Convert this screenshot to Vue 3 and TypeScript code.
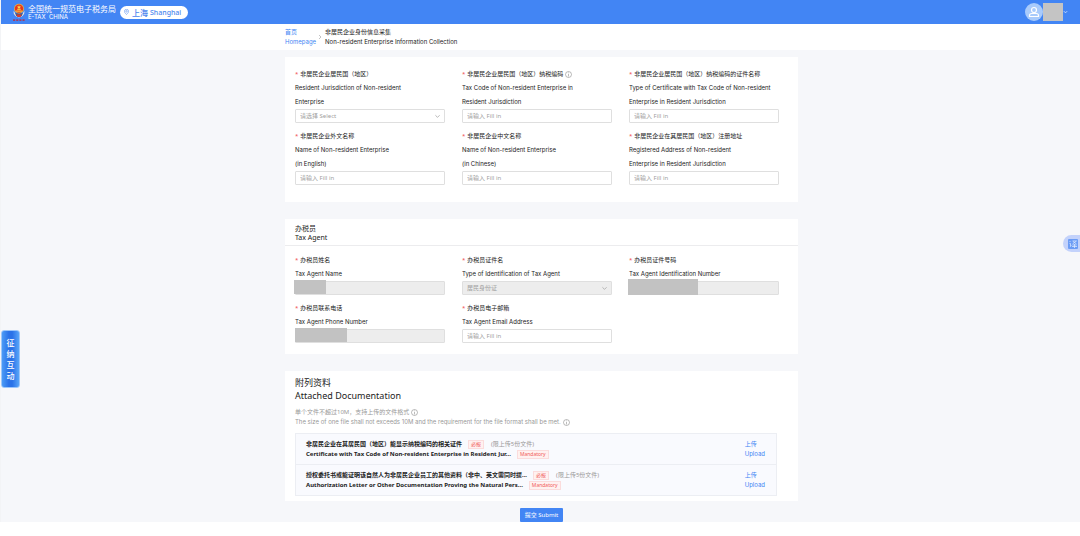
<script setup lang="ts">
import { ref } from 'vue'

interface Field {
  id: string
  zh: string
  en: string[]
  kind: 'text' | 'select'
  placeholder: string
  info?: boolean
  disabled?: boolean
  mask?: string
}

interface Attachment {
  zh: string
  en: string
}

const enterpriseFields: Field[] = [
  { id: 'jurisdiction', zh: '非居民企业居民国（地区）', en: ['Resident Jurisdiction of Non-resident', 'Enterprise'], kind: 'select', placeholder: '请选择 Select' },
  { id: 'tax-code', zh: '非居民企业居民国（地区）纳税编码', en: ['Tax Code of Non-resident Enterprise in', 'Resident Jurisdiction'], kind: 'text', placeholder: '请输入 Fill in', info: true },
  { id: 'certificate', zh: '非居民企业居民国（地区）纳税编码的证件名称', en: ['Type of Certificate with Tax Code of Non-resident', 'Enterprise in Resident Jurisdiction'], kind: 'text', placeholder: '请输入 Fill in' },
  { id: 'name-en', zh: '非居民企业外文名称', en: ['Name of Non-resident Enterprise', '(in English)'], kind: 'text', placeholder: '请输入 Fill in' },
  { id: 'name-zh', zh: '非居民企业中文名称', en: ['Name of Non-resident Enterprise', '(in Chinese)'], kind: 'text', placeholder: '请输入 Fill in' },
  { id: 'address', zh: '非居民企业在其居民国（地区）注册地址', en: ['Registered Address of Non-resident', 'Enterprise in Resident Jurisdiction'], kind: 'text', placeholder: '请输入 Fill in' },
]

const agentFields: Field[] = [
  { id: 'agent-name', zh: '办税员姓名', en: ['Tax Agent Name'], kind: 'text', placeholder: '', disabled: true, mask: 'mask-name' },
  { id: 'agent-id-type', zh: '办税员证件名', en: ['Type of Identification of Tax Agent'], kind: 'select', placeholder: '居民身份证', disabled: true },
  { id: 'agent-id', zh: '办税员证件号码', en: ['Tax Agent Identification Number'], kind: 'text', placeholder: '', disabled: true, mask: 'mask-id' },
  { id: 'agent-phone', zh: '办税员联系电话', en: ['Tax Agent Phone Number'], kind: 'text', placeholder: '', disabled: true, mask: 'mask-phone' },
  { id: 'agent-email', zh: '办税员电子邮箱', en: ['Tax Agent Email Address'], kind: 'text', placeholder: '请输入 Fill in' },
]

const groups = [
  { key: 'enterprise', fields: enterpriseFields, title: null },
  { key: 'agent', fields: agentFields, title: { zh: '办税员', en: 'Tax Agent' } },
]

const attachments: Attachment[] = [
  { zh: '非居民企业在其居民国（地区）能显示纳税编码的相关证件', en: 'Certificate with Tax Code of Non-resident Enterprise in Resident Jur...' },
  { zh: '授权委托书或能证明该自然人为非居民企业员工的其他资料（非中、英文需同时提...', en: 'Authorization Letter or Other Documentation Proving the Natural Pers...' },
]

const values = ref<Record<string, string>>({})
</script>

<template>
  <div class="page">
    <header class="topbar">
      <svg class="emblem" viewBox="0 0 40 54" aria-hidden="true">
        <path d="M5 22c-2 10 4 17 15 19 11-2 17-9 15-19l-5 9H10z" fill="#e9e3dc" />
        <path d="M9 29h22l-3 8H12z" fill="#4a5a86" />
        <circle cx="20" cy="16" r="14" fill="#f0b43c" />
        <circle cx="20" cy="16" r="12" fill="#e2361f" />
        <path d="M20 6l2 4h4l-3 3 1 4-4-2-4 2 1-4-3-3h4z" fill="#ffd34d" />
        <path d="M11 21h18v4H11zM15 17h10v3H15z" fill="#f7bd3a" />
        <path d="M13 33h14l-2 7H15z" fill="#d93a2b" />
        <path d="M3 46h6v5H3zM12 46h6v5h-6zM21 46h6v5h-6zM30 46h6v5h-6z" fill="#a43c63" />
      </svg>
      <div class="brand">
        <span class="brand-zh">全国统一规范电子税务局</span>
        <span class="brand-en">E-TAX&nbsp; CHINA</span>
      </div>
      <button class="region" type="button">
        <svg class="pin" viewBox="0 0 12 14" aria-hidden="true">
          <path d="M6 13C3 10 1 8 1 5.500a5 5 0 0 1 10 0C11 8 9 10 6 13z" fill="none" stroke="currentColor" stroke-width="1.300" />
          <circle cx="6" cy="5.500" r="1.800" fill="none" stroke="currentColor" stroke-width="1.200" />
        </svg>
        <span class="region-zh">上海</span>
        <span class="region-en">Shanghai</span>
      </button>
      <button class="account" type="button" aria-label="Account">
        <svg class="avatar" viewBox="0 0 18 18" aria-hidden="true">
          <circle cx="9" cy="9" r="9" fill="#a9cbfb" />
          <circle cx="9" cy="7" r="2.500" fill="none" stroke="#fff" stroke-width="1.200" />
          <path d="M4.500 13.500v-1c0-1.200 1-2 2.300-2h4.400c1.300 0 2.300.8 2.300 2v1z" fill="none" stroke="#fff" stroke-width="1.200" />
        </svg>
        <span class="user-mask"></span>
        <svg class="caret" viewBox="0 0 6 4" aria-hidden="true"><path d="M1 1l2 2 2-2" fill="none" stroke="#d5e4fd" /></svg>
      </button>
    </header>

    <nav class="crumbs" aria-label="Breadcrumb">
      <div class="wrap crumb-row">
        <a class="crumb" href="#"><span>首页</span><span class="en">Homepage</span></a>
        <svg class="sep" viewBox="0 0 4 6" aria-hidden="true"><path d="M1 1l2 2-2 2" fill="none" stroke="#aaa" stroke-width=".7" /></svg>
        <div class="crumb"><span>非居民企业身份信息采集</span><span class="en">Non-resident Enterprise Information Collection</span></div>
      </div>
    </nav>

    <main class="main">
      <form class="wrap form" @submit.prevent>
        <section v-for="g in groups" :key="g.key" class="card" :class="g.key">
          <h2 v-if="g.title" class="card-title"><span>{{ g.title.zh }}</span><span>{{ g.title.en }}</span></h2>
          <div class="fields">
            <div v-for="f in g.fields" :key="f.id" class="field">
              <label :for="f.id">
                <span class="line">
                  <i class="star">*</i>{{ f.zh }}
                  <svg v-if="f.info" class="info" viewBox="0 0 14 14" aria-hidden="true">
                    <circle cx="7" cy="7" r="6" /><path d="M7 6v5M7 3v1.500" />
                  </svg>
                </span>
                <span v-for="line in f.en" :key="line" class="line en">{{ line }}</span>
              </label>
              <div class="control">
                <template v-if="f.kind === 'select'">
                  <select :id="f.id" :disabled="f.disabled">
                    <option>{{ f.placeholder }}</option>
                  </select>
                  <svg class="chevron" viewBox="0 0 8 6" aria-hidden="true"><path d="M1.500 1.500L4 4l2.500-2.500" fill="none" stroke="#aaa" /></svg>
                </template>
                <input v-else :id="f.id" v-model="values[f.id]" type="text" :placeholder="f.placeholder" :disabled="f.disabled" />
                <span v-if="f.mask" class="mask" :class="f.mask"></span>
              </div>
            </div>
          </div>
        </section>

        <section class="card docs">
          <h2 class="docs-title"><span>附列资料</span><span>Attached Documentation</span></h2>
          <p class="note">
            <span>单个文件不超过10M，支持上传的文件格式
              <svg class="info" viewBox="0 0 14 14" aria-hidden="true"><circle cx="7" cy="7" r="6" /><path d="M7 6v5M7 3v1.500" /></svg>
            </span>
            <span class="en">The size of one file shall not exceeds 10M and the requirement for the file format shall be met.
              <svg class="info" viewBox="0 0 14 14" aria-hidden="true"><circle cx="7" cy="7" r="6" /><path d="M7 6v5M7 3v1.500" /></svg>
            </span>
          </p>
          <ul class="files">
            <li v-for="a in attachments" :key="a.en" class="file">
              <div class="file-text">
                <div class="file-line"><b>{{ a.zh }}</b><span class="tag">必报</span><span class="limit">(限上传5份文件)</span></div>
                <div class="file-line"><b>{{ a.en }}</b><span class="tag">Mandatory</span></div>
              </div>
              <a class="upload" href="#"><span>上传</span><span class="en">Upload</span></a>
            </li>
          </ul>
        </section>
        <button class="submit" type="submit">提交 Submit</button>
      </form>
    </main>

    <button class="interact" type="button">征纳互动</button>
    <button class="translate" type="button" aria-label="Translate">
      <svg viewBox="0 0 10 10" aria-hidden="true">
        <rect width="10" height="10" rx="1" fill="#6b9cf5" />
        <path d="M1.500 2l1 1M1.500 4.500h1v3l1-1M4.500 2h4l-4 3M5 2.500L8.500 5M4.500 6h4M4 7.500h5M6.500 5v4" fill="none" stroke="#e3ecff" stroke-width=".7" />
      </svg>
    </button>
  </div>
</template>

<style>
html,
body {
  background: #fff;
}
</style>

<style scoped>
* {
  box-sizing: border-box;
}
.page {
  position: relative;
  border-left: 1px solid #f3f4f6;
  font-family: "Noto Sans", "Noto Sans CJK SC", sans-serif;
  font-size: 6px;
  line-height: 9px;
  color: #222;
}
.en {
  font-family: Inter, "Noto Sans", sans-serif;
}
button,
input,
select {
  font: inherit;
  margin: 0;
}
a {
  color: #4285f4;
  text-decoration: none;
}
.topbar {
  display: flex;
  align-items: center;
  height: 24px;
  padding: 0 12px 0 11px;
  background: #4285f4;
  color: #fff;
}
.emblem {
  width: 14px;
  height: 19px;
}
.brand {
  display: flex;
  flex-direction: column;
  margin: 0 4px 0 2px;
}
.brand-zh {
  font-size: 8px;
  line-height: 9px;
}
.brand-en {
  font-family: Inter, sans-serif;
  line-height: 7px;
}
.region {
  display: flex;
  align-items: center;
  height: 13px;
  padding: 0 7px 0 4px;
  border: 0;
  border-radius: 7px;
  background: #fff;
  color: #4b86ee;
  font-size: 7px;
  font-weight: 500;
}
.pin {
  width: 5px;
  height: 6px;
  margin-right: 3px;
}
.region-zh {
  font-size: 8px;
  margin-right: 2px;
}
.account {
  display: flex;
  align-items: center;
  margin-left: auto;
  padding: 0;
  border: 0;
  background: none;
}
.avatar {
  width: 18px;
  height: 18px;
}
.user-mask {
  width: 20px;
  height: 18px;
  background: #c4c4c4;
}
.caret {
  width: 5px;
  height: 4px;
}
.wrap {
  width: 513px;
  max-width: 100%;
  margin: 0 auto;
}
.crumbs {
  padding: 4px 0 4px 2px;
  background: #fff;
}
.crumb-row {
  display: flex;
  align-items: center;
}
.crumb {
  display: flex;
  flex-direction: column;
}
.sep {
  width: 4px;
  height: 6px;
  margin: 0 3px 0 2px;
}
.main {
  padding: 7px 0 0 2px;
  background: #f6f7fa;
}
.form {
  display: flex;
  flex-direction: column;
}
.card {
  margin-bottom: 17px;
  background: #fff;
}
.fields {
  display: grid;
  grid-template-columns: repeat(3, minmax(0, 1fr));
  gap: 6px 17px;
  padding: 10px 19px 17px 10px;
}
.agent .fields {
  padding-top: 7px;
  padding-bottom: 11px;
}
.card-title {
  display: flex;
  flex-direction: column;
  margin: 0;
  padding: 5px 10px 3px;
  border-bottom: 1px solid #ececee;
  font-size: 7px;
  font-weight: 400;
}
.line {
  display: block;
  line-height: 14px;
  white-space: nowrap;
}
.star {
  margin-right: 2px;
  color: #f04b4b;
  font-style: normal;
}
.info {
  width: 7px;
  height: 7px;
  vertical-align: -2px;
  fill: none;
  stroke: #777;
}
.control {
  position: relative;
  height: 14px;
}
input,
select {
  display: block;
  width: 100%;
  height: 14px;
  padding: 0 4px;
  border: 1px solid #dfdfdf;
  border-radius: 1px;
  background: #fff;
  color: #a0a0a0;
  appearance: none;
  opacity: 1;
}
input::placeholder {
  color: #a0a0a0;
  opacity: 1;
}
input:disabled,
select:disabled {
  background: #ededed;
}
.chevron {
  position: absolute;
  top: 5px;
  right: 4px;
  width: 7px;
  height: 5px;
  pointer-events: none;
}
.mask {
  position: absolute;
  top: -1px;
  left: -1px;
  height: 14px;
  background: #c2c2c2;
}
.mask-name {
  width: 32px;
}
.mask-id {
  top: -2px;
  width: 70px;
  height: 16px;
}
.mask-phone {
  left: 0;
  width: 52px;
}
.docs {
  margin-bottom: 7px;
  padding: 5px 21px 5px 10px;
}
.docs-title {
  display: flex;
  flex-direction: column;
  margin: 0 0 6px;
  font-size: 9px;
  line-height: 13px;
  font-weight: 400;
}
.note {
  display: flex;
  flex-direction: column;
  margin: 0 0 7px;
  color: #999;
}
.files {
  margin: 0;
  padding: 0;
  border: 1px solid #eceef3;
  background: #f9fafe;
  list-style: none;
}
.file {
  display: flex;
  align-items: center;
  justify-content: space-between;
  padding: 5px 11px 5px 10px;
}
.file + .file {
  border-top: 1px solid #eceef3;
}
.file-line {
  display: flex;
  align-items: center;
  height: 10px;
  white-space: nowrap;
}
.tag {
  margin-left: 6px;
  padding: 0 2px;
  border: 1px solid #fbdcdc;
  background: #fff1f0;
  color: #f05a5a;
  font-size: 5px;
  line-height: 7px;
}
.limit {
  margin-left: 7px;
  color: #999;
}
.upload {
  display: flex;
  flex-direction: column;
  line-height: 10px;
}
.submit {
  align-self: center;
  height: 14px;
  padding: 0 5px;
  border: 0;
  border-radius: 1px;
  background: #4285f4;
  color: #fff;
}
.interact {
  position: absolute;
  top: 330px;
  left: 0;
  width: 19px;
  height: 58px;
  padding: 0 4px;
  border: 1px solid #9cc6fa;
  border-radius: 3px;
  background: linear-gradient(90deg, #4b9bf6, #2a72e8 40%, #2a72e8 60%, #58a5f8);
  color: #fff;
  font-size: 8px;
  font-weight: 500;
  line-height: 11px;
}
.translate {
  position: absolute;
  top: 235px;
  right: 0;
  display: flex;
  align-items: center;
  width: 17px;
  height: 17px;
  padding: 0 0 0 5px;
  border: 0;
  border-radius: 9px 0 0 9px;
  background: #c3d2fb;
}
.translate svg {
  width: 10px;
  height: 10px;
}
</style>
